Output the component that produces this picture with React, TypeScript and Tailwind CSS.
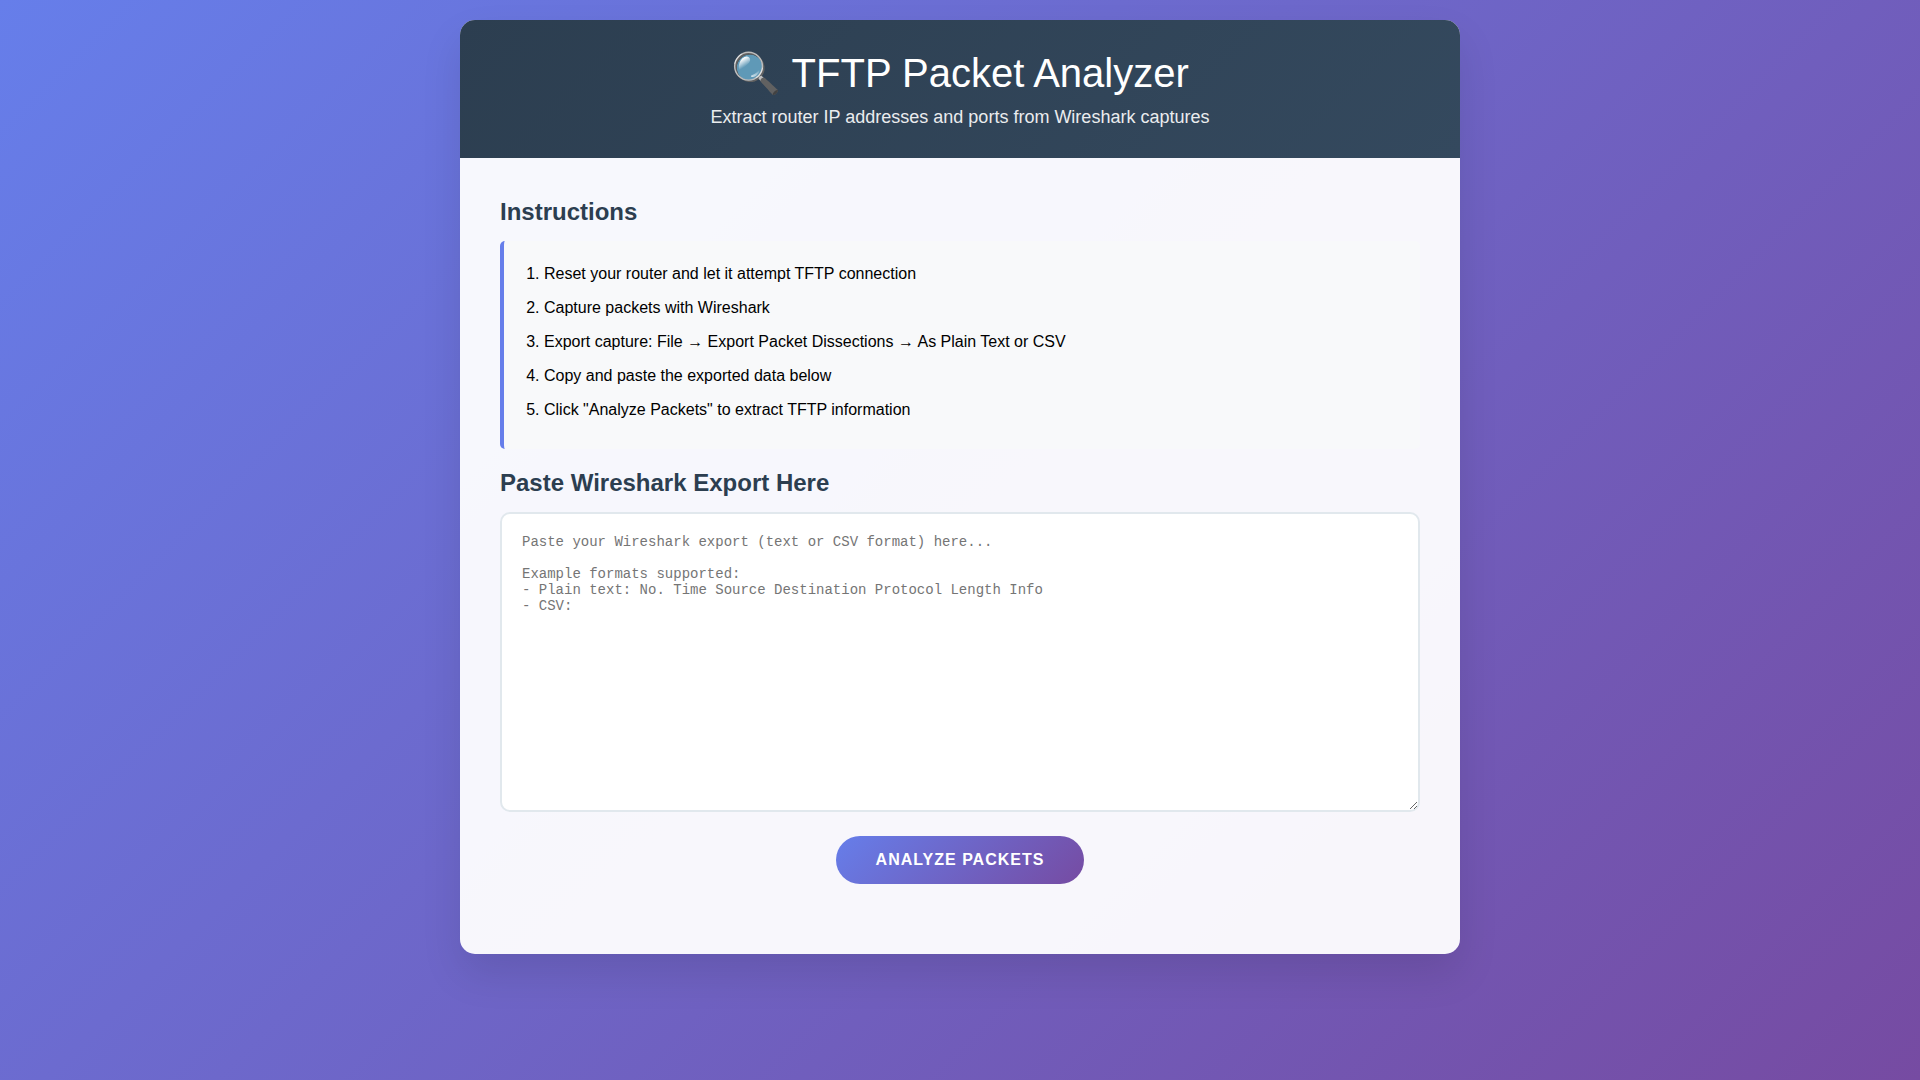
import React, { useState } from 'react';

const STEPS = [
  'Reset your router and let it attempt TFTP connection',
  'Capture packets with Wireshark',
  'Export capture: File → Export Packet Dissections → As Plain Text or CSV',
  'Copy and paste the exported data below',
  'Click "Analyze Packets" to extract TFTP information',
];

const PLACEHOLDER = `Paste your Wireshark export (text or CSV format) here...

Example formats supported:
- Plain text: No. Time Source Destination Protocol Length Info
- CSV: `;

const Header: React.FC = () => (
  <header className="bg-linear-[135deg,#2c3e50,#34495e] p-[30px] text-center text-white">
    <h1 className="mb-[10px] text-[40px] leading-[46px] font-light">🔍 TFTP Packet Analyzer</h1>
    <p className="text-[18px] leading-[22px] opacity-90">
      Extract router IP addresses and ports from Wireshark captures
    </p>
  </header>
);

const App: React.FC = () => {
  const [capture, setCapture] = useState('');

  return (
    <div className="min-h-screen bg-linear-[135deg,#667eea_0%,#764ba2_100%] p-5 font-['Liberation_Sans',Arial,sans-serif] text-black">
      <div className="mx-auto max-w-[1000px] overflow-hidden rounded-[15px] bg-white/95 shadow-[0_20px_40px_rgba(0,0,0,0.1)]">
        <Header />

        <main className="px-10 pt-10 pb-[70px]">
          <section className="mb-5">
            <h2 className="mb-[15px] text-2xl leading-[28px] font-bold text-[#2c3e50]">Instructions</h2>
            <div className="rounded-[5px] border-l-4 border-[#667eea] bg-[#f8f9fa] px-5 pt-5 pb-[26px]">
              <ol className="list-decimal space-y-2 pl-5">
                {STEPS.map((step) => (
                  <li key={step} className="leading-[26px]">{step}</li>
                ))}
              </ol>
            </div>
          </section>

          <section>
            <h2 className="mb-[15px] text-2xl leading-[28px] font-bold text-[#2c3e50]">
              <label htmlFor="capture">Paste Wireshark Export Here</label>
            </h2>
            <textarea
              id="capture"
              value={capture}
              onChange={(e) => setCapture(e.target.value)}
              placeholder={PLACEHOLDER}
              className="block h-[300px] w-full resize-y rounded-[10px] border-2 border-[#e1e8ed] bg-white p-5 font-['Liberation_Mono',monospace] text-sm leading-4 placeholder:text-[#757575]"
            />
          </section>

          <div className="mt-6 text-center">
            <button
              type="button"
              className="rounded-full bg-linear-[135deg,#667eea_0%,#764ba2_100%] px-10 py-[15px] text-base leading-[18px] font-bold tracking-[1px] text-white uppercase"
            >
              Analyze Packets
            </button>
          </div>
        </main>
      </div>
    </div>
  );
};

export default App;
